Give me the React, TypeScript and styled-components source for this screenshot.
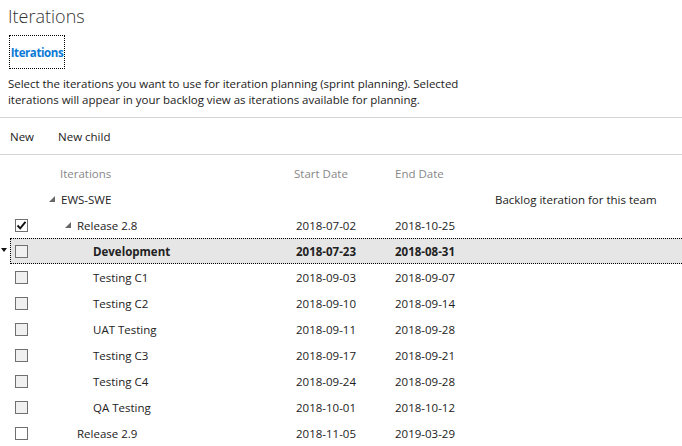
import React from "react";
import styled, { createGlobalStyle } from "styled-components";

const Global = createGlobalStyle`
  html, body { margin: 0; padding: 0; background: #fff; }
  body { font-family: "Open Sans", "Noto Sans", sans-serif; color: #222; }
  * { box-sizing: border-box; }
`;

const Page = styled.div`
  width: 682px;
  height: 446px;
  overflow: hidden;
`;

const Head = styled.div`
  padding: 0 8px;
`;

const Title = styled.h1`
  margin: 0;
  height: 35px;
  padding-top: 4px;
  font-size: 18px;
  font-weight: 300;
  color: #333;
  line-height: 24px;
`;

const TabBox = styled.div`
  margin-left: 1px;
  width: 56px;
  height: 34px;
  border: 1px dotted #000;
  display: flex;
  align-items: center;
  justify-content: center;
  font-size: 11.5px;
  font-weight: 700;
  color: #0a7ad6;
  letter-spacing: -0.4px;
`;

const Desc = styled.p`
  margin: 7px 0 0;
  font-size: 11.5px;
  line-height: 16px;
  color: #222;
  width: 470px;
  letter-spacing: -0.03px;
`;

const Divider = styled.div<{ $gap?: number }>`
  height: 1px;
  margin-top: ${(p) => p.$gap ?? 0}px;
  background: #d4d4d4;
`;

const Toolbar = styled.div`
  height: 36px;
  display: flex;
  align-items: center;
  gap: 24px;
  padding-left: 10px;
  font-size: 11.5px;
  color: #222;
`;

const Table = styled.div`
  margin-top: 5px;
`;

const Row = styled.div<{ $selected?: boolean; $bold?: boolean; $header?: boolean }>`
  position: relative;
  margin-left: 10px;
  height: 26px;
  display: grid;
  grid-template-columns: 285px 99px 100px 1fr;
  align-items: center;
  font-size: 11.5px;
  font-weight: ${(p) => (p.$bold ? 700 : 400)};
  color: ${(p) => (p.$header ? "#888" : "#222")};
  background: ${(p) => (p.$selected ? "#e6e6e6" : "transparent")};
  border: 1px dotted ${(p) => (p.$selected ? "#000" : "transparent")};
  border-right: none;
`;

const NameCell = styled.div`
  display: flex;
  align-items: center;
  padding-left: 4px;
  height: 100%;
`;

const Check = styled.span<{ $muted?: boolean }>`
  width: 13px;
  height: 13px;
  border: 1px solid #707070;
  background: ${(p) => (p.$muted ? "#f0f0f0" : "#fff")};
  display: inline-flex;
  align-items: center;
  justify-content: center;
  flex: none;
`;

const CheckSpacer = styled.span`
  width: 13px;
  flex: none;
`;

const Indent = styled.span<{ $level: number; $header?: boolean }>`
  width: ${(p) => (p.$header ? 32 : 33 + p.$level * 16)}px;
  flex: none;
  display: inline-flex;
  justify-content: flex-end;
  padding-right: 6px;
`;

const Label = styled.span`
  white-space: nowrap;
`;

const Cell = styled.div<{ $shift?: number }>`
  white-space: nowrap;
  margin-left: ${(p) => p.$shift ?? 0}px;
`;

const Marker = styled.span`
  position: absolute;
  left: -10px;
  top: 9px;
  width: 0;
  height: 0;
  border-left: 3px solid transparent;
  border-right: 3px solid transparent;
  border-top: 4px solid #111;
`;

const Expander = () => (
  <svg width="6" height="6" viewBox="0 0 6 6">
    <path d="M6 0 L6 6 L0 6 Z" fill="#666" />
  </svg>
);

const Tick = () => (
  <svg width="11" height="11" viewBox="0 0 11 11">
    <path d="M1.5 5.5 L4.2 8.3 L9.5 1.8" stroke="#111" strokeWidth="1.9" fill="none" />
  </svg>
);

type Item = {
  name: string;
  level: number;
  start?: string;
  end?: string;
  check?: "none" | "checked" | "muted" | "plain";
  expander?: boolean;
  selected?: boolean;
  extra?: string;
};

const items: Item[] = [
  { name: "EWS-SWE", level: 0, check: "none", expander: true, extra: "Backlog iteration for this team" },
  { name: "Release 2.8", level: 1, check: "checked", expander: true, start: "2018-07-02", end: "2018-10-25" },
  { name: "Development", level: 2, check: "muted", start: "2018-07-23", end: "2018-08-31", selected: true },
  { name: "Testing C1", level: 2, check: "muted", start: "2018-09-03", end: "2018-09-07" },
  { name: "Testing C2", level: 2, check: "muted", start: "2018-09-10", end: "2018-09-14" },
  { name: "UAT Testing", level: 2, check: "muted", start: "2018-09-11", end: "2018-09-28" },
  { name: "Testing C3", level: 2, check: "muted", start: "2018-09-17", end: "2018-09-21" },
  { name: "Testing C4", level: 2, check: "muted", start: "2018-09-24", end: "2018-09-28" },
  { name: "QA Testing", level: 2, check: "muted", start: "2018-10-01", end: "2018-10-12" },
  { name: "Release 2.9", level: 1, check: "plain", start: "2018-11-05", end: "2019-03-29" },
];

export default function App() {
  return (
    <Page>
      <Global />
      <Head>
        <Title>Iterations</Title>
        <TabBox>Iterations</TabBox>
        <Desc>
          Select the iterations you want to use for iteration planning (sprint planning). Selected
          iterations will appear in your backlog view as iterations available for planning.
        </Desc>
      </Head>
      <Divider $gap={9} />
      <Toolbar>
        <span>New</span>
        <span>New child</span>
      </Toolbar>
      <Divider />
      <Table>
        <Row $header>
          <NameCell>
            <CheckSpacer />
            <Indent $level={0} $header />
            <Label>Iterations</Label>
          </NameCell>
          <Cell $shift={-2}>Start Date</Cell>
          <Cell>End Date</Cell>
          <Cell />
        </Row>
        {items.map((it) => (
          <Row key={it.name} $selected={it.selected} $bold={it.selected}>
            {it.selected && <Marker />}
            <NameCell>
              {it.check === "none" ? (
                <CheckSpacer />
              ) : (
                <Check $muted={it.check === "muted"}>{it.check === "checked" && <Tick />}</Check>
              )}
              <Indent $level={it.level}>{it.expander && <Expander />}</Indent>
              <Label>{it.name}</Label>
            </NameCell>
            <Cell>{it.start}</Cell>
            <Cell>{it.end}</Cell>
            <Cell>{it.extra}</Cell>
          </Row>
        ))}
      </Table>
    </Page>
  );
}
